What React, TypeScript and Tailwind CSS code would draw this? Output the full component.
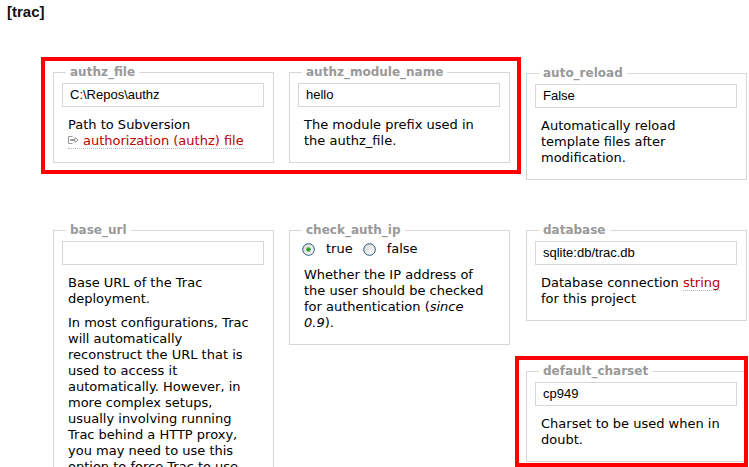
import React from "react";

const verdana = "font-['DejaVu_Sans',Verdana,sans-serif]";
const arial = "font-['Liberation_Sans',Arial,sans-serif]";

function Field({
  legend,
  children,
  className = "",
}: {
  legend: string;
  children: React.ReactNode;
  className?: string;
}) {
  return (
    <fieldset
      className={`w-[221px] shrink-0 border border-[#d7d7d7] px-[8px] pt-[3px] pb-[13px] ${className}`}
    >
      <legend
        className={`ml-[4px] px-[4px] text-[12px] leading-[16px] font-bold text-[#999] ${verdana}`}
      >
        {legend}
      </legend>
      {children}
    </fieldset>
  );
}

function TextInput({ value }: { value: string }) {
  return (
    <div
      className={`h-[24px] w-[202px] border border-[#d7d7d7] px-[7px] text-[13px] leading-[22px] text-black ${arial}`}
    >
      {value}
    </div>
  );
}

function Desc({ children }: { children: React.ReactNode }) {
  return (
    <div
      className={`mx-[6px] mt-[10px] flex flex-col gap-[8px] text-[13px] leading-[16px] text-black ${verdana}`}
    >
      {children}
    </div>
  );
}

function Radio({ checked }: { checked?: boolean }) {
  return (
    <svg width="13" height="13" viewBox="0 0 13 13">
      <defs>
        <linearGradient id={checked ? "rg1" : "rg2"} x1="0" y1="0" x2="1" y2="1">
          <stop offset="0" stopColor="#d4d4cc" />
          <stop offset="1" stopColor="#ffffff" />
        </linearGradient>
      </defs>
      <circle
        cx="6.5"
        cy="6.5"
        r="5.8"
        fill={`url(#${checked ? "rg1" : "rg2"})`}
        stroke="#2a5584"
        strokeWidth="1"
      />
      {checked && <circle cx="6.5" cy="6.5" r="2.2" fill="#2ea12e" />}
    </svg>
  );
}

function ExtLink({ children }: { children: React.ReactNode }) {
  return (
    <span className="border-b border-dotted border-[#bbb] text-[#b00]">
      {children}
    </span>
  );
}

export default function App() {
  return (
    <div className="relative h-[467px] w-[749px] overflow-hidden bg-white">
      <h2
        className={`pl-[7px] pt-[3px] text-[15px] leading-[18px] font-bold text-[#111] ${arial}`}
      >
        [trac]
      </h2>

      {/* row 1 */}
      <div className="mt-[36px] flex items-start">
        <div className="ml-[41px] flex w-[480px] items-start gap-[15px] border-4 border-[#ff0000] pt-[3px] pr-[7px] pb-[7px] pl-[8px]">
          <Field legend="authz_file">
            <TextInput value="C:\Repos\authz" />
            <Desc>
              <p>
                Path to Subversion{" "}
                <span className="whitespace-nowrap border-b border-dotted border-[#bbb]">
                  <svg
                    width="11"
                    height="8"
                    viewBox="0 0 11 8"
                    className="mr-[4px] inline-block align-[1px]"
                  >
                    <path
                      d="M4.5 0.5H0.5V7.5H4.5"
                      fill="none"
                      stroke="#999"
                      strokeWidth="1"
                    />
                    <path
                      d="M2.5 3.5H7V1.5L10.2 4L7 6.5V4.5H2.5Z"
                      fill="none"
                      stroke="#999"
                      strokeWidth="1"
                      strokeLinejoin="miter"
                    />
                  </svg>
                  <span className="text-[#b00]">authorization (authz) file</span>
                </span>
              </p>
            </Desc>
          </Field>
          <Field legend="authz_module_name">
            <TextInput value="hello" />
            <Desc>
              <p>The module prefix used in the authz_file.</p>
            </Desc>
          </Field>
        </div>
        <Field legend="auto_reload" className="mt-[8px] ml-[5px]">
          <TextInput value="False" />
          <Desc>
            <p>Automatically reload template files after modification.</p>
          </Desc>
        </Field>
      </div>

      {/* row 2 */}
      <div className="mt-[42px] ml-[53px] flex items-start">
        <Field legend="base_url">
          <TextInput value="" />
          <Desc>
            <p>Base URL of the Trac deployment.</p>
            <p>
              In most configurations, Trac will automatically reconstruct the
              URL that is used to access it automatically. However, in more
              complex setups, usually involving running Trac behind a HTTP
              proxy, you may need to use this option to force Trac to use the
              correct URL.
            </p>
          </Desc>
        </Field>

        <Field legend="check_auth_ip" className="ml-[15px]">
          <div
            className={`ml-[4px] flex h-[16px] items-center text-[13px] leading-[16px] text-black ${verdana}`}
          >
            <Radio checked />
            <span className="ml-[11px]">true</span>
            <span className="ml-[10px] flex">
              <Radio />
            </span>
            <span className="ml-[11px]">false</span>
          </div>
          <Desc>
            <p>
              Whether the IP address of the user should be checked for
              authentication (<em>since 0.9</em>).
            </p>
          </Desc>
        </Field>

        <div className="ml-[16px] flex flex-col">
          <Field legend="database">
            <TextInput value="sqlite:db/trac.db" />
            <Desc>
              <p>
                Database connection <ExtLink>string</ExtLink> for this project
              </p>
            </Desc>
          </Field>
          <div className="relative mt-[42px]">
            <Field legend="default_charset">
              <TextInput value="cp949" />
              <Desc>
                <p>Charset to be used when in doubt.</p>
              </Desc>
            </Field>
            <div className="pointer-events-none absolute -top-[7px] -left-[11px] h-[111px] w-[233px] border-4 border-[#ff0000]" />
          </div>
        </div>
      </div>
    </div>
  );
}
